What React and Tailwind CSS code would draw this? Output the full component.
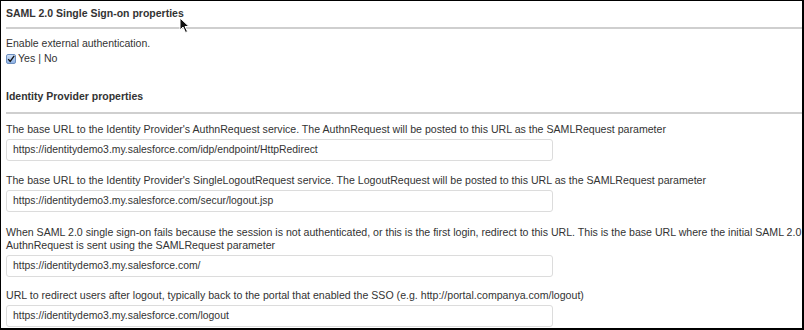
import React from "react";

const font = { fontFamily: '"Liberation Sans", Arial, Helvetica, sans-serif' };

function Field({ label, value, mt }) {
  return (
    <div className={mt}>
      <div className="whitespace-nowrap text-[10.6px] leading-[13px] text-[#333]">{label}</div>
      <div className="mt-[3px] h-[22px] w-[547px] rounded-[3px] border border-[#dcdcdc] bg-white pl-[6px] text-[10.4px] leading-[20px] text-[#333]">
        {value}
      </div>
    </div>
  );
}

export default function App() {
  return (
    <div
      className="relative h-[330px] w-[804px] overflow-hidden border-b-2 border-l border-r-2 border-t border-black bg-white pl-[5px] pt-[6px]"
      style={font}
    >
      <div className="text-[10.5px] font-bold leading-[13px] text-[#333]">
        SAML 2.0 Single Sign-on properties
      </div>
      <div className="mt-[7px] border-t-2 border-[#cfcfcf]" />
      <div className="mt-[8px] text-[10.5px] leading-[13px] text-[#333]">
        Enable external authentication.
      </div>
      <div className="mt-[1px] flex h-[15px] items-center text-[10.6px] text-[#333]">
        <span className="mr-[2px] flex h-[10px] w-[10px] items-center justify-center rounded-[2px] border border-[#6d8fc0] bg-gradient-to-b from-[#cfe0f7] to-[#8fb3e6]">
          <svg width="10" height="10" viewBox="0 0 10 10">
            <path d="M1.5 5.2 L4 8 L9 1" fill="none" stroke="#111" strokeWidth="1.7" />
          </svg>
        </span>
        <span>Yes | No</span>
      </div>
      <div className="mt-[24px] text-[10.5px] font-bold leading-[13px] text-[#333]">
        Identity Provider properties
      </div>
      <div className="mt-[9px] border-t-2 border-[#cfcfcf]" />
      <Field
        mt="mt-[9px]"
        label="The base URL to the Identity Provider's AuthnRequest service. The AuthnRequest will be posted to this URL as the SAMLRequest parameter"
        value="https://identitydemo3.my.salesforce.com/idp/endpoint/HttpRedirect"
      />
      <Field
        mt="mt-[13px]"
        label="The base URL to the Identity Provider's SingleLogoutRequest service. The LogoutRequest will be posted to this URL as the SAMLRequest parameter"
        value="https://identitydemo3.my.salesforce.com/secur/logout.jsp"
      />
      <Field
        mt="mt-[14px]"
        label={
          <>
            When SAML 2.0 single sign-on fails because the session is not authenticated, or this is the first login, redirect to this URL. This is the base URL where the initial SAML 2.0
            <br />
            AuthnRequest is sent using the SAMLRequest parameter
          </>
        }
        value="https://identitydemo3.my.salesforce.com/"
      />
      <Field
        mt="mt-[12px]"
        label="URL to redirect users after logout, typically back to the portal that enabled the SSO (e.g. http://portal.companya.com/logout)"
        value="https://identitydemo3.my.salesforce.com/logout"
      />
      <svg
        className="absolute left-[178px] top-[16px]"
        width="12"
        height="17"
        viewBox="0 0 12 17"
      >
        <path d="M1 1 L1 13 L4 10 L6.5 15.5 L8.5 14.5 L6 9.5 L10 9.5 Z" fill="#111" stroke="#fff" strokeWidth="1" />
      </svg>
    </div>
  );
}
